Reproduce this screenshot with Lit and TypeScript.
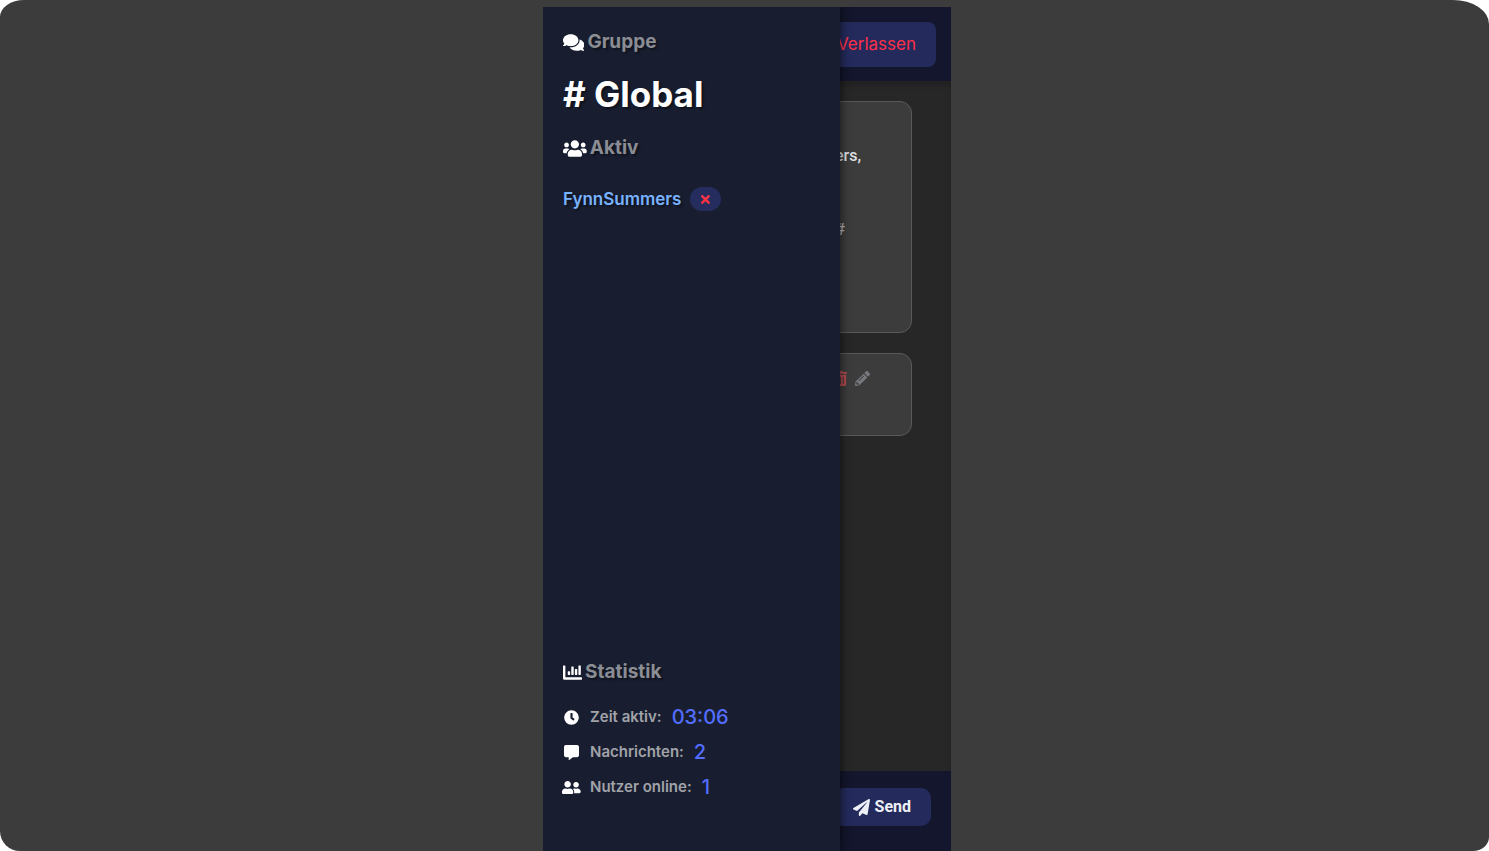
import { LitElement, html, css, svg } from "lit";
import { customElement, property, state } from "lit/decorators.js";

type Glyph = { width: number; d: string };

const GLYPHS: Record<string, Glyph> = {
  comments: {
    width: 576,
    d: "M416 192c0-88.4-93.1-160-208-160S0 103.6 0 192c0 34.3 14.1 65.9 38 92-13.4 30.2-35.5 54.2-35.8 54.5-2.2 2.3-2.8 5.7-1.5 8.7S4.8 352 8 352c36.6 0 66.9-12.3 88.7-25 32.2 15.7 70.3 25 111.3 25 114.9 0 208-71.6 208-160zm122 220c23.9-26 38-57.7 38-92 0-66.9-53.5-124.2-129.3-148.1.9 6.6 1.3 13.3 1.3 20.1 0 105.9-107.7 192-240 192-10.8 0-21.3-.8-31.7-1.9C207.8 439.6 281.8 480 368 480c41 0 79.1-9.2 111.3-25 21.8 12.7 52.1 25 88.7 25 3.2 0 6.1-1.9 7.3-4.8 1.3-2.9.7-6.3-1.5-8.7-.3-.3-22.4-24.2-35.8-54.5z",
  },
  users: {
    width: 640,
    d: "M96 224c35.3 0 64-28.7 64-64s-28.7-64-64-64-64 28.7-64 64 28.7 64 64 64zm448 0c35.3 0 64-28.7 64-64s-28.7-64-64-64-64 28.7-64 64 28.7 64 64 64zm32 32h-64c-17.6 0-33.5 7.1-45.1 18.6 40.3 22.1 68.9 62 75.1 109.4h66c17.7 0 32-14.3 32-32v-32c0-35.3-28.7-64-64-64zm-256 0c61.9 0 112-50.1 112-112S381.9 32 320 32 208 82.1 208 144s50.1 112 112 112zm76.8 32h-8.3c-20.8 10-43.9 16-68.5 16s-47.6-6-68.5-16h-8.3C179.6 288 128 339.6 128 403.2V432c0 26.5 21.5 48 48 48h288c26.5 0 48-21.5 48-48v-28.8c0-63.6-51.6-115.2-115.2-115.2zm-223.7-13.4C161.5 263.1 145.6 256 128 256H64c-35.3 0-64 28.7-64 64v32c0 17.7 14.3 32 32 32h65.9c6.3-47.4 34.9-87.3 75.2-109.4z",
  },
  chart: {
    width: 512,
    d: "M332.8 320h38.4c6.4 0 12.8-6.4 12.8-12.8V172.8c0-6.4-6.4-12.8-12.8-12.8h-38.4c-6.4 0-12.8 6.4-12.8 12.8v134.4c0 6.4 6.4 12.8 12.8 12.8zm96 0h38.4c6.4 0 12.8-6.4 12.8-12.8V76.8c0-6.4-6.4-12.8-12.8-12.8h-38.4c-6.4 0-12.8 6.4-12.8 12.8v230.4c0 6.4 6.4 12.8 12.8 12.8zm-288 0h38.4c6.4 0 12.8-6.4 12.8-12.8v-70.4c0-6.4-6.4-12.8-12.8-12.8h-38.4c-6.4 0-12.8 6.4-12.8 12.8v70.4c0 6.4 6.4 12.8 12.8 12.8zm96 0h38.4c6.4 0 12.8-6.4 12.8-12.8V108.8c0-6.4-6.4-12.8-12.8-12.8h-38.4c-6.4 0-12.8 6.4-12.8 12.8v198.4c0 6.4 6.4 12.8 12.8 12.8zM496 384H64V80c0-8.84-7.16-16-16-16H16C7.16 64 0 71.16 0 80v336c0 17.67 14.33 32 32 32h464c8.84 0 16-7.16 16-16v-32c0-8.84-7.16-16-16-16z",
  },
  clock: {
    width: 512,
    d: "M256 8C119 8 8 119 8 256s111 248 248 248 248-111 248-248S393 8 256 8zm57.1 350.1L224.9 294c-3.1-2.3-4.9-5.9-4.9-9.7V116c0-6.6 5.4-12 12-12h48c6.6 0 12 5.4 12 12v137.7l63.5 46.2c5.4 3.9 6.5 11.4 2.6 16.8l-28.2 38.8c-3.9 5.3-11.4 6.5-16.8 2.6z",
  },
  message: {
    width: 512,
    d: "M448 0H64C28.7 0 0 28.7 0 64v288c0 35.3 28.7 64 64 64h96v84c0 9.8 11.2 15.5 19.1 9.7L304 416h144c35.3 0 64-28.7 64-64V64c0-35.3-28.7-64-64-64z",
  },
  friends: {
    width: 640,
    d: "M192 256c61.9 0 112-50.1 112-112S253.9 32 192 32 80 82.1 80 144s50.1 112 112 112zm76.8 32h-8.3c-20.8 10-43.9 16-68.5 16s-47.6-6-68.5-16h-8.3C51.6 288 0 339.6 0 403.2V432c0 26.5 21.5 48 48 48h288c26.5 0 48-21.5 48-48v-28.8c0-63.6-51.6-115.2-115.2-115.2zM480 256c53 0 96-43 96-96s-43-96-96-96-96 43-96 96 43 96 96 96zm48 32h-3.8c-13.9 4.8-28.6 8-44.2 8s-30.3-3.2-44.2-8H432c-20.4 0-39.2 5.9-55.7 15.4 24.4 26.3 39.7 61.2 39.7 99.8v38.4c0 2.2-.5 4.3-.6 6.4H592c26.5 0 48-21.5 48-48 0-61.9-50.1-112-112-112z",
  },
  times: {
    width: 352,
    d: "M242.72 256l100.07-100.07c12.28-12.28 12.28-32.19 0-44.48l-22.24-22.24c-12.28-12.28-32.19-12.28-44.48 0L176 189.28 75.93 89.21c-12.28-12.28-32.19-12.28-44.48 0L9.21 111.45c-12.28 12.28-12.28 32.19 0 44.48L109.28 256 9.21 356.07c-12.28 12.28-12.28 32.19 0 44.48l22.24 22.24c12.28 12.28 32.2 12.28 44.48 0L176 322.72l100.07 100.07c12.28 12.28 32.2 12.28 44.48 0l22.24-22.24c12.28-12.28 12.28-32.19 0-44.48L242.72 256z",
  },
  trash: {
    width: 448,
    d: "M32 464a48 48 0 0 0 48 48h288a48 48 0 0 0 48-48V128H32zm272-256a16 16 0 0 1 32 0v224a16 16 0 0 1-32 0zm-96 0a16 16 0 0 1 32 0v224a16 16 0 0 1-32 0zm-96 0a16 16 0 0 1 32 0v224a16 16 0 0 1-32 0zM432 32H312l-9.4-18.7A24 24 0 0 0 281.1 0H166.8a23.72 23.72 0 0 0-21.4 13.3L136 32H16A16 16 0 0 0 0 48v32a16 16 0 0 0 16 16h416a16 16 0 0 0 16-16V48a16 16 0 0 0-16-16z",
  },
  pencil: {
    width: 512,
    d: "M497.9 142.1l-46.1 46.1c-4.7 4.7-12.3 4.7-17 0l-111-111c-4.7-4.7-4.7-12.3 0-17l46.1-46.1c18.7-18.7 49.1-18.7 67.9 0l60.1 60.1c18.8 18.7 18.8 49.1 0 67.9zM284.2 99.8L21.6 362.4.4 483.9c-2.9 16.4 11.4 30.6 27.8 27.8l121.5-21.3 262.6-262.6c4.7-4.7 4.7-12.3 0-17l-111-111c-4.8-4.7-12.4-4.7-17.1 0zM124.1 339.9c-5.5-5.5-5.5-14.3 0-19.8l154-154c5.5-5.5 14.3-5.5 19.8 0s5.5 14.3 0 19.8l-154 154c-5.5 5.5-14.3 5.5-19.8 0zM88 424h48v36.3l-64.5 11.3-31.1-31.1L51.7 376H88v48z",
  },
  plane: {
    width: 512,
    d: "M476 3.2L12.5 270.6c-18.1 10.4-15.8 35.6 2.2 43.2L121 358.4l287.3-253.2c5.5-4.9 13.3 2.6 8.6 8.3L176 407v80.5c0 23.6 28.5 32.9 42.5 15.8L282 426l124.6 52.2c14.2 6 30.4-2.9 33-18.2l72-432C515 7.8 493.3-6.8 476 3.2z",
  },
};

@customElement("chat-icon")
class ChatIcon extends LitElement {
  @property() name = "comments";

  static styles = css`
    :host {
      display: inline-flex;
      height: 16px;
      flex: none;
    }
    .glyph {
      height: 100%;
      fill: currentColor;
    }
  `;

  render() {
    const glyph = GLYPHS[this.name];
    return html`<svg class="glyph" viewBox="0 0 ${glyph.width} 512" aria-hidden="true">
      ${svg`<path d=${glyph.d}></path>`}
    </svg>`;
  }
}

@customElement("chat-sidebar")
class ChatSidebar extends LitElement {
  @state() private members = ["FynnSummers"];
  @state() private stats = [
    { icon: "clock", label: "Zeit aktiv:", value: "03:06" },
    { icon: "message", label: "Nachrichten:", value: "2" },
    { icon: "friends", label: "Nutzer online:", value: "1" },
  ];

  static styles = css`
    :host {
      display: flex;
      flex-direction: column;
      box-sizing: border-box;
      padding: 21px 20px 49px;
      background: #181e30;
      color: #ffffff;
      box-shadow: 2px 0 8px rgba(0, 0, 0, 0.5);
    }
    .heading {
      display: flex;
      align-items: center;
      gap: 3px;
      margin: 0;
      font-size: 19px;
      line-height: 28px;
      font-weight: 700;
      color: #8b8d94;
      text-shadow: 2px 2px 2px rgba(0, 0, 0, 0.4);
    }
    .heading chat-icon {
      height: 19px;
      color: #ffffff;
    }
    .room {
      margin: 14px 0 16px;
      font-size: 35px;
      line-height: 48px;
      font-weight: 700;
      text-shadow: 2px 2px 2px rgba(0, 0, 0, 0.4);
    }
    .members {
      flex: 1;
      margin: 25px 0 0;
      padding: 0;
      list-style: none;
    }
    .member {
      display: flex;
      align-items: center;
      gap: 9px;
      font-size: 17px;
      line-height: 24px;
      font-weight: 600;
      color: #79b2ff;
      text-shadow: 2px 2px 2px rgba(0, 0, 0, 0.4);
    }
    .kick {
      display: flex;
      align-items: center;
      justify-content: center;
      width: 31px;
      height: 24px;
      padding: 0;
      border: 0;
      border-radius: 12px;
      background: #252d5e;
      color: #ff3344;
    }
    .kick chat-icon {
      height: 13px;
    }
    .stats {
      display: grid;
      gap: 5px;
      margin: 16px 0 0;
    }
    .stat {
      display: grid;
      grid-template-columns: 17px auto 1fr;
      align-items: center;
      gap: 10px;
      line-height: 30px;
    }
    .stat chat-icon {
      height: 15px;
      justify-self: center;
    }
    .label {
      font-size: 15px;
      font-weight: 600;
      color: #a1a3a9;
    }
    .value {
      margin: 0;
      font-size: 20px;
      font-weight: 500;
      color: #536dfe;
    }
  `;

  render() {
    return html`
      <h3 class="heading"><chat-icon name="comments"></chat-icon>Gruppe</h3>
      <h1 class="room"># Global</h1>
      <h3 class="heading"><chat-icon name="users"></chat-icon>Aktiv</h3>
      <ul class="members">
        ${this.members.map(
          (name) => html`<li class="member">
            ${name}
            <button class="kick" aria-label="${name} entfernen"><chat-icon name="times"></chat-icon></button>
          </li>`
        )}
      </ul>
      <h3 class="heading"><chat-icon name="chart"></chat-icon>Statistik</h3>
      <dl class="stats">
        ${this.stats.map(
          (s) => html`<div class="stat">
            <chat-icon name=${s.icon}></chat-icon>
            <dt class="label">${s.label}</dt>
            <dd class="value">${s.value}</dd>
          </div>`
        )}
      </dl>
    `;
  }
}

@customElement("app-root")
class AppRoot extends LitElement {
  static styles = css`
    :host {
      display: block;
      background: #ffffff;
      font-family: Inter, "Noto Sans", sans-serif;
    }
    .page {
      display: flex;
      justify-content: center;
      box-sizing: border-box;
      min-height: 100vh;
      padding: 7px 0 0 5px;
      background: #3c3c3c;
      border-radius: 24px 36px 16px 20px / 17px 24px 14px 20px;
    }
    .device {
      position: relative;
      display: flex;
      flex-direction: column;
      width: min(408px, 100%);
      overflow: hidden;
      background: #272727;
    }
    .drawer {
      position: absolute;
      inset: 0 auto 0 0;
      width: 297px;
    }
    .bar {
      display: flex;
      justify-content: flex-end;
      background: #13162c;
    }
    .top {
      padding: 15px 15px 14px;
    }
    .bottom {
      padding: 17px 20px 25px;
    }
    .btn {
      border: 0;
      background: #242b5c;
      font-size: 16px;
    }
    .leave {
      padding: 0 20px;
      border-radius: 8px;
      color: #ff3048;
      font-family: inherit;
      font-size: 17px;
      line-height: 45px;
    }
    .send {
      display: flex;
      align-items: center;
      gap: 5px;
      padding: 0 20px;
      border-radius: 10px;
      color: #eef0f6;
      font-family: Roboto, sans-serif;
      font-weight: 700;
      line-height: 38px;
    }
    .send chat-icon {
      height: 17px;
    }
    .feed {
      flex: 1;
      display: flex;
      flex-direction: column;
      gap: 20px;
      padding: 20px 39px 20px 20px;
      box-shadow: inset 0 5px 5px rgba(0, 0, 0, 0.15);
    }
    .card {
      display: flex;
      flex-direction: column;
      align-items: flex-end;
      box-sizing: border-box;
      border: 1px solid #595959;
      border-radius: 12px;
      background: #3c3c3c;
      color: #dfe0e4;
      font-family: Roboto, sans-serif;
      font-size: 16px;
      font-weight: 500;
      line-height: 24px;
    }
    .welcome {
      gap: 50px;
      padding: 42px 50px 90px;
    }
    .line {
      margin: 0;
    }
    .tag {
      padding-right: 16px;
      color: #b5b6ba;
    }
    .own {
      padding: 17px 41px 49px;
    }
    .actions {
      display: flex;
      gap: 8px;
    }
    .action {
      display: flex;
      padding: 0;
      border: 0;
      background: none;
      color: #77787d;
    }
    .action chat-icon {
      height: 15px;
    }
    .delete {
      color: #b14a50;
    }
  `;

  render() {
    return html`
      <div class="page">
        <div class="device">
          <header class="bar top"><button class="btn leave">Verlassen</button></header>
          <main class="feed">
            <article class="card welcome">
              <p class="line">FynnSummers,</p>
              <p class="line tag">#</p>
            </article>
            <article class="card own">
              <div class="actions">
                <button class="action delete" aria-label="Löschen"><chat-icon name="trash"></chat-icon></button>
                <button class="action" aria-label="Bearbeiten"><chat-icon name="pencil"></chat-icon></button>
              </div>
            </article>
          </main>
          <footer class="bar bottom">
            <button class="btn send"><chat-icon name="plane"></chat-icon>Send</button>
          </footer>
          <chat-sidebar class="drawer"></chat-sidebar>
        </div>
      </div>
    `;
  }
}
